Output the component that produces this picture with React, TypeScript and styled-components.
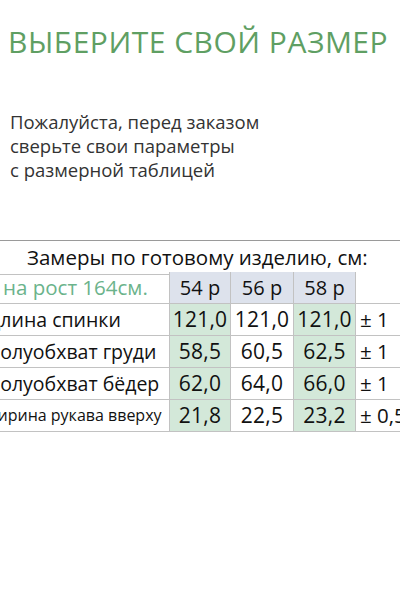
import React from 'react'
import styled, { createGlobalStyle } from 'styled-components'

const Global = createGlobalStyle`
  html, body {
    margin: 0;
    padding: 0;
    background: #fff;
    overflow: hidden;
  }
  body {
    font-family: "Open Sans", "Noto Sans", sans-serif;
  }
`

const sizes = ['54 р', '56 р', '58 р']

const rows = [
  { label: 'Длина спинки', indent: -13, small: false, values: ['121,0', '121,0', '121,0'], tol: '± 1' },
  { label: 'Полуобхват груди', indent: -14, small: false, values: ['58,5', '60,5', '62,5'], tol: '± 1' },
  { label: 'Полуобхват бёдер', indent: -14, small: false, values: ['62,0', '64,0', '66,0'], tol: '± 1' },
  { label: 'Ширина рукава вверху', indent: -19, small: true, values: ['21,8', '22,5', '23,2'], tol: '± 0,5' },
]

const App = () => {
  return (
    <Page>
      <Global />
      <Title>ВЫБЕРИТЕ СВОЙ РАЗМЕР</Title>
      <Note>
        Пожалуйста, перед заказом
        <br />
        сверьте свои параметры
        <br />
        с размерной таблицей
      </Note>
      <Table>
        <Caption>Замеры по готовому изделию, см:</Caption>
        <Label $green $indent={3}>на рост 164см.</Label>
        {sizes.map((s) => (
          <SizeCell key={s}>{s}</SizeCell>
        ))}
        <Cell $tol />
        {rows.map((r) => (
          <React.Fragment key={r.label}>
            <Label $indent={r.indent} $small={r.small}>{r.label}</Label>
            {r.values.map((v, i) => (
              <Cell key={i} $shade={i !== 1}>{v}</Cell>
            ))}
            <Cell $tol>{r.tol}</Cell>
          </React.Fragment>
        ))}
      </Table>
    </Page>
  )
}

export default App

const Page = styled.div`
  width: 400px;
  height: 600px;
  overflow: hidden;
  display: flex;
  flex-direction: column;
`

const Title = styled.h1`
  margin: 24px 0 0 8px;
  font-size: 30px;
  font-weight: 400;
  line-height: 36px;
  color: #5f9f63;
  white-space: nowrap;
  letter-spacing: 0.5px;
`

const Note = styled.p`
  margin: 50px 0 0 10px;
  font-size: 18.5px;
  line-height: 24px;
  color: #333;
`

const Table = styled.div`
  margin-top: 58px;
  width: 410px;
  display: grid;
  grid-template-columns: 170px 61px 63px 62px 54px;
  grid-auto-rows: 32px;
  color: #111;
`

const Caption = styled.div`
  grid-column: 1 / -1;
  height: 33px;
  border-top: 1px solid #9a9a9a;
  border-bottom: 1px solid #c2c2c2;
  font-size: 20.5px;
  line-height: 33px;
  padding-left: 27px;
  white-space: nowrap;
`

const Label = styled.div<{ $green?: boolean; $indent: number; $small?: boolean }>`
  overflow: hidden;
  white-space: nowrap;
  text-indent: ${(p) => p.$indent}px;
  font-size: ${(p) => (p.$small ? '16px' : p.$green ? '20.5px' : '19.5px')};
  line-height: 31px;
  color: ${(p) => (p.$green ? '#6bb38b' : '#111')};
  border-bottom: 1px solid #c2c2c2;
  border-right: 1px solid #c2c2c2;
`

const SizeCell = styled.div`
  background: #dde2ec;
  text-align: center;
  font-size: 20px;
  line-height: 31px;
  border-bottom: 1px solid #c2c2c2;
  border-right: 1px solid #c2c2c2;
`

const Cell = styled.div<{ $shade?: boolean; $tol?: boolean }>`
  background: ${(p) => (p.$shade ? '#d3e8d9' : '#fff')};
  text-align: ${(p) => (p.$tol ? 'left' : 'center')};
  padding-left: ${(p) => (p.$tol ? '4px' : '0')};
  font-size: ${(p) => (p.$tol ? '20.5px' : '21px')};
  line-height: 31px;
  white-space: nowrap;
  overflow: hidden;
  letter-spacing: ${(p) => (p.$tol ? '0' : '0.2px')};
  border-bottom: 1px solid #c2c2c2;
  border-right: ${(p) => (p.$tol ? 'none' : '1px solid #c2c2c2')};
`
